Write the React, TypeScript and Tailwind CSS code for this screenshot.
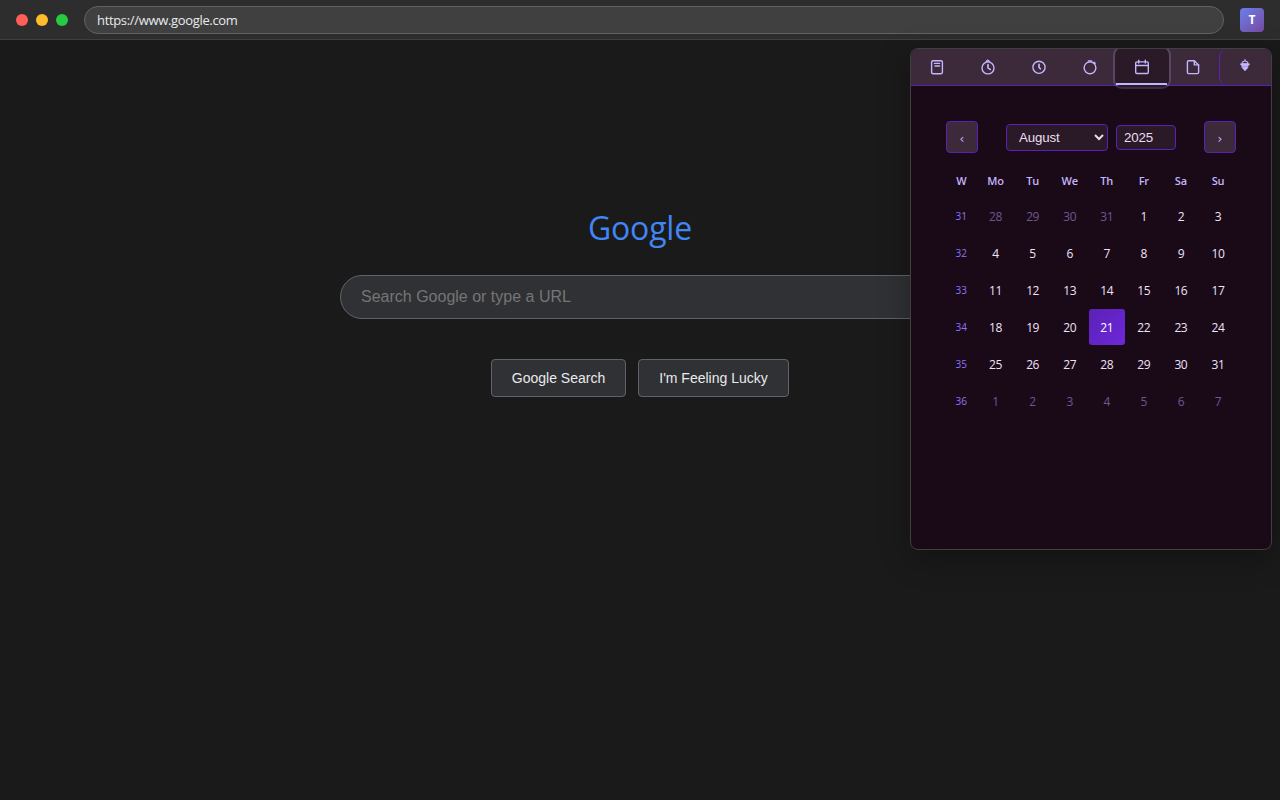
import type { ReactNode } from 'react';

type Tab = { name: string; icon: ReactNode };

const tabs: Tab[] = [
  {
    name: 'Notes',
    icon: (
      <>
        <rect x="2.6" y="1.7" width="10.8" height="13" rx="1.5" />
        <path d="M5.4 4.3h5.2M6 7h4.6" strokeWidth="1.3" />
      </>
    ),
  },
  {
    name: 'Timer',
    icon: (
      <>
        <circle cx="8" cy="8.9" r="6" />
        <path d="M6.2 2.4h3.6L8 1z" fill="currentColor" strokeWidth="1" />
        <path d="M8 5.7v3.2l2.2 1.5" strokeWidth="1.7" />
      </>
    ),
  },
  {
    name: 'Clock',
    icon: (
      <>
        <circle cx="8" cy="8.3" r="6.1" />
        <path d="M8 5.3v3l1.3 1.5" strokeWidth="1.7" />
      </>
    ),
  },
  {
    name: 'Stopwatch',
    icon: (
      <>
        <circle cx="8" cy="8.8" r="5.9" />
        <path d="M6.5 2h3M12 3.4l.9.9" strokeWidth="1.7" />
      </>
    ),
  },
  {
    name: 'Calendar',
    icon: (
      <>
        <rect x="1.7" y="2.9" width="12.6" height="11.6" rx="1.2" />
        <path d="M4.7 1.3v2.8M11.3 1.3v2.8M1.7 6.5h12.6" />
      </>
    ),
  },
  {
    name: 'Document',
    icon: (
      <>
        <path d="M9.3 1.7H3.7c-.8 0-1.3.5-1.3 1.3v10.3c0 .8.5 1.3 1.3 1.3h8.6c.8 0 1.3-.5 1.3-1.3V5.9z" />
        <path d="M9.3 1.7v4.2h4.3" />
      </>
    ),
  },
  {
    name: 'Theme',
    icon: (
      <g strokeWidth="1.1">
        <path d="M8 .6v1.2M8 1.8 5.2 3.2v1.6h5.6V3.2z" />
        <path d="M3.6 5h8.8L11 6.4H5z" fill="currentColor" />
        <path d="M4.8 7.4h6.4L10.2 9.6 8 11.7 5.8 9.6z" fill="currentColor" strokeWidth=".7" />
      </g>
    ),
  },
];

const weekdays = ['Mo', 'Tu', 'We', 'Th', 'Fr', 'Sa', 'Su'];

const weeks = [
  { week: 31, days: [28, 29, 30, 31, 1, 2, 3] },
  { week: 32, days: [4, 5, 6, 7, 8, 9, 10] },
  { week: 33, days: [11, 12, 13, 14, 15, 16, 17] },
  { week: 34, days: [18, 19, 20, 21, 22, 23, 24] },
  { week: 35, days: [25, 26, 27, 28, 29, 30, 31] },
  { week: 36, days: [1, 2, 3, 4, 5, 6, 7] },
];

function tabClass(i: number) {
  if (i === 4) return 'relative z-10';
  if (i === 6) return 'rounded-l-[8px] border-l border-[#5b21b6]';
  return '';
}

function dayClass(row: number, day: number) {
  if ((row === 0 && day > 20) || (row === 5 && day < 20)) return 'text-[#6d5690]';
  if (row === 3 && day === 21)
    return 'rounded-[3px] bg-linear-135 from-[#5b21b6] to-[#6d28d9] text-white font-medium';
  return 'text-[#eee2f8]';
}

function BrowserBar() {
  return (
    <header className="flex h-10 shrink-0 items-center gap-4 border-b border-[#404040] bg-[#2d2d2d] px-4">
      <div className="flex gap-2">
        <span className="size-3 rounded-full bg-[#ff5f57]" />
        <span className="size-3 rounded-full bg-[#ffbd2e]" />
        <span className="size-3 rounded-full bg-[#28ca42]" />
      </div>
      <div className="flex h-7 flex-1 items-center rounded-full border border-[#5f6368] bg-[#404040] px-3 pt-0.5 text-[13px] tracking-[-0.33px] text-[#e8eaed]">
        https://www.google.com
      </div>
      <div className="flex size-6 items-center justify-center rounded bg-linear-135 from-[#667eea] to-[#764ba2] pt-px text-xs font-bold text-white">
        T
      </div>
    </header>
  );
}

function SearchPage() {
  return (
    <main className="flex flex-col items-center pt-[166px]">
      <h1 className="h-[44px] text-[32px] leading-[44px] tracking-[-0.2px] text-[#4285f4]">Google</h1>
      <input
        className="mt-[25px] h-11 w-[600px] rounded-full border border-[#5f6368] bg-[#303134] px-5 font-['Liberation_Sans',sans-serif] text-base text-[#e8eaed] placeholder:text-[#757575]"
        placeholder="Search Google or type a URL"
      />
      <div className="mt-10 flex gap-3 font-['Liberation_Sans',sans-serif] text-sm text-[#e8eaed]">
        <button className="h-[38px] w-[135px] whitespace-nowrap rounded border border-[#5f6368] bg-[#303134]">
          Google Search
        </button>
        <button className="h-[38px] w-[151px] whitespace-nowrap rounded border border-[#5f6368] bg-[#303134]">
          I'm Feeling Lucky
        </button>
      </div>
    </main>
  );
}

function NavButton({ children }: { children: ReactNode }) {
  return (
    <button className="flex size-8 items-center justify-center rounded border border-[#5b21b6] bg-[#3c2a3a] pt-[3px] font-['DejaVu_Sans',sans-serif] text-xs text-[#c4b5fd]">
      {children}
    </button>
  );
}

function CalendarPopup() {
  return (
    <aside className="absolute top-12 right-2 h-[502px] w-[362px] overflow-hidden rounded-lg border border-[#404040] bg-[#1a0a18] shadow-[0_8px_32px_rgba(0,0,0,0.3)]">
      <nav className="flex h-[37px] border-b border-[#5b21b6] bg-[#3c2a3a] text-[#c4b5fd]">
        {tabs.map((tab, i) => (
          <button
            key={tab.name}
            aria-label={tab.name}
            className={`flex h-9 flex-1 items-center justify-center ${tabClass(i)}`}
          >
            {i === 4 && (
              <>
                <span className="absolute -inset-x-[3.5px] -top-[3px] -bottom-[3.5px] -z-10 rounded-[9px] border-[2.5px] border-[#c4b5fd]/20 bg-[#2a1a28] bg-clip-padding" />
                <span className="absolute inset-x-0 bottom-0 h-0.5 bg-[#c4b5fd]" />
              </>
            )}
            <svg
              className="size-4"
              viewBox="0 0 16 16"
              fill="none"
              stroke="currentColor"
              strokeWidth="1.4"
              strokeLinecap="round"
              strokeLinejoin="round"
            >
              {tab.icon}
            </svg>
          </button>
        ))}
      </nav>
      <section className="px-[35px] pt-[35px]">
        <div className="flex items-center justify-between">
          <NavButton>‹</NavButton>
          <div className="flex items-center gap-2 font-['Liberation_Sans',sans-serif] text-[13.333px] tracking-[-0.15px] text-[#eaddf2]">
            <select
              defaultValue="August"
              className="h-[27px] w-[102px] rounded border border-[#5b21b6] bg-[#2a1a28] pr-[7px] pl-2"
            >
              <option>August</option>
            </select>
            <input
              defaultValue="2025"
              className="h-[25px] w-[60px] rounded border border-[#5b21b6] bg-[#2a1a28] px-[7px]"
            />
          </div>
          <NavButton>›</NavButton>
        </div>
        <div className="mt-3 grid grid-cols-[30.5px_repeat(7,1fr)] gap-px text-center">
          {['W', ...weekdays].map((d) => (
            <div key={d} className="h-8 text-[11px] leading-8 font-semibold tracking-[-0.2px] text-[#c4b5fd]">
              {d}
            </div>
          ))}
          {weeks.map(({ week, days }, row) => [
            <div key={`w${week}`} className="h-9 text-[10px] leading-9 text-[#9170fb]">
              {week}
            </div>,
            ...days.map((day) => (
              <div
                key={`${week}-${day}`}
                className={`h-9 pt-px text-xs leading-9 tracking-[-0.4px] ${dayClass(row, day)}`}
              >
                {day}
              </div>
            )),
          ])}
        </div>
      </section>
    </aside>
  );
}

export default function App() {
  return (
    <div className="relative flex h-screen w-full flex-col overflow-hidden bg-[#1a1a1a] font-['Open_Sans','Noto_Sans',sans-serif]">
      <BrowserBar />
      <SearchPage />
      <CalendarPopup />
    </div>
  );
}
